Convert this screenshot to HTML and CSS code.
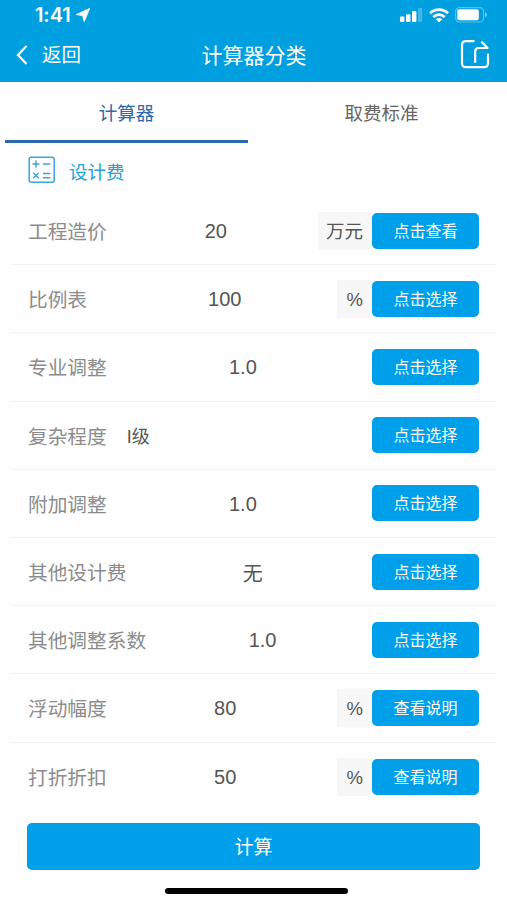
FILE: index.html
```html
<!DOCTYPE html>
<html lang="zh-CN">
<head>
    <meta charset="UTF-8">
    <meta name="viewport" content="width=device-width, initial-scale=1.0">
    <title>计算器分类</title>
    <link rel="stylesheet" href="styles.css">
</head>
<body>
    <header class="header">
        <div class="status-bar">
            <div class="status-time">
                <span>1:41</span>
                <svg class="location" width="14" height="14" viewBox="0 0 14 14"><path d="M13.8 0.3L8.2 13.6L6.6 7.6L0.3 6.6Z" fill="#fff" stroke="#fff" stroke-width="0.8" stroke-linejoin="round"/></svg>
            </div>
            <div class="status-icons">
                <svg width="23" height="14" viewBox="0 0 23 14" fill="#fff">
                    <rect x="0" y="8.5" width="4.4" height="5.5" rx="1"/>
                    <rect x="6" y="6.2" width="4.4" height="7.8" rx="1"/>
                    <rect x="12" y="3" width="4.4" height="11" rx="1"/>
                    <rect x="18" y="0" width="4.2" height="14" rx="1" opacity="0.25"/>
                </svg>
                <svg width="20" height="15" viewBox="0 0 20 15" fill="none" stroke="#fff" stroke-width="2.6">
                    <path d="M1 5.3C6 0.4 14 0.4 19 5.3"/>
                    <path d="M4.3 9C7.5 5.8 12.5 5.8 15.7 9"/>
                    <path d="M10 14.6L6.8 11.3Q10 8.7 13.2 11.3Z" fill="#fff" stroke="none"/>
                </svg>
                <svg width="33" height="16" viewBox="0 0 33 16">
                    <rect x="0.6" y="0.6" width="28" height="14.4" rx="4" fill="none" stroke="#fff" stroke-opacity="0.35" stroke-width="1.2"/>
                    <rect x="2.3" y="2.3" width="21.5" height="11" rx="2" fill="#fff"/>
                    <path d="M30 5.2Q32 6 32 7.8Q32 9.6 30 10.4Z" fill="#fff" opacity="0.45"/>
                </svg>
            </div>
        </div>
        <nav class="nav-bar">
            <a class="back">
                <svg width="12" height="20" viewBox="0 0 12 20" fill="none" stroke="#fff" stroke-width="2.2"><path d="M10.5 1L2 10L10.5 19"/></svg>
                <span>返回</span>
            </a>
            <h1 class="title">计算器分类</h1>
            <a class="share">
                <svg width="30" height="30" viewBox="0 0 30 30" fill="none" stroke="#fff" stroke-width="2.2" stroke-linecap="round" stroke-linejoin="round">
                    <path d="M13.5 2.2H6Q2 2.2 2 6.2V24.2Q2 28.2 6 28.2H24Q28 28.2 28 24.2V15.5"/>
                    <path d="M15.2 23V12.5Q15.2 9 18.7 9H27.5L22 3.2"/>
                </svg>
            </a>
        </nav>
    </header>

    <div class="tabs">
        <div class="tab active">计算器</div>
        <div class="tab">取费标准</div>
    </div>

    <div class="section-title">
        <svg width="28" height="28" viewBox="0 0 28 28" fill="none" stroke="#3aa5d8" stroke-width="1.5">
            <rect x="1.2" y="1.2" width="25" height="25" rx="2"/>
            <path d="M4.5 8H11.5M8 4.5V11.5M15 8H22.3M5.2 16.8L10.7 22.3M10.7 16.8L5.2 22.3M15 17.5H22.3M15 21.7H22.3"/>
        </svg>
        <span>设计费</span>
    </div>

    <form class="rows">
        <div class="row">
            <label class="label">工程造价</label>
            <span class="value">20</span>
            <span class="unit">万元</span>
            <button type="button" class="btn">点击查看</button>
        </div>
        <div class="row">
            <label class="label">比例表</label>
            <span class="value">100</span>
            <span class="unit percent">%</span>
            <button type="button" class="btn">点击选择</button>
        </div>
        <div class="row">
            <label class="label">专业调整</label>
            <span class="value">1.0</span>
            <button type="button" class="btn">点击选择</button>
        </div>
        <div class="row">
            <label class="label">复杂程度</label>
            <span class="value left">I级</span>
            <button type="button" class="btn">点击选择</button>
        </div>
        <div class="row">
            <label class="label">附加调整</label>
            <span class="value">1.0</span>
            <button type="button" class="btn">点击选择</button>
        </div>
        <div class="row">
            <label class="label">其他设计费</label>
            <span class="value">无</span>
            <button type="button" class="btn">点击选择</button>
        </div>
        <div class="row">
            <label class="label">其他调整系数</label>
            <span class="value">1.0</span>
            <button type="button" class="btn">点击选择</button>
        </div>
        <div class="row">
            <label class="label">浮动幅度</label>
            <span class="value">80</span>
            <span class="unit percent">%</span>
            <button type="button" class="btn">查看说明</button>
        </div>
        <div class="row">
            <label class="label">打折折扣</label>
            <span class="value">50</span>
            <span class="unit percent">%</span>
            <button type="button" class="btn">查看说明</button>
        </div>
    </form>

    <button type="button" class="submit">计算</button>
    <div class="home-bar"></div>
</body>
</html>
```
FILE: styles.css
```css
* {
    box-sizing: border-box;
}
body {
    margin: 0;
    height: 900px;
    overflow: hidden;
    background-color: #fefefe;
    font-family: "Liberation Sans", "Noto Sans CJK SC", sans-serif;
    color: #555;
}
.header {
    height: 82px;
    background-color: #009fe0;
    color: #fff;
}
.status-bar {
    height: 30px;
    display: flex;
    justify-content: space-between;
    align-items: center;
    padding: 0 19px 0 35px;
}
.status-time {
    display: flex;
    align-items: center;
    gap: 5px;
    font-family: Inter, sans-serif;
    font-size: 20px;
    font-weight: 600;
    letter-spacing: -0.1px;
}
.status-icons {
    display: flex;
    align-items: center;
    gap: 6px;
}
.nav-bar {
    height: 50px;
    display: grid;
    grid-template-columns: 1fr auto 1fr;
    align-items: center;
    padding: 0 17px 0 16px;
}
.back {
    display: flex;
    align-items: center;
    gap: 14px;
    font-size: 19.5px;
}
.back span {
    margin-top: -4px;
}
.title {
    margin: -2px 0 0 2px;
    font-size: 21px;
    font-weight: normal;
}
.share {
    justify-self: end;
    height: 30px;
    margin-top: -2px;
}
.tabs {
    height: 61px;
    display: flex;
    padding: 0 5px;
}
.tab {
    flex: 1;
    display: flex;
    align-items: center;
    justify-content: center;
    margin-left: 13px;
    padding-top: 1px;
    font-size: 18.5px;
    color: #666;
    border-bottom: 3px solid transparent;
}
.tab.active {
    flex: 0 0 243px;
    margin-left: 0;
    color: #2d68ad;
    border-bottom-color: #2b67ab;
}
.section-title {
    height: 54px;
    display: flex;
    align-items: center;
    gap: 13px;
    padding-left: 28px;
    font-size: 18.5px;
    color: #25a0d8;
}
.section-title span {
    margin-top: 2px;
}
.rows {
    margin: 0 11px;
}
.row {
    height: 68.2px;
    display: flex;
    align-items: center;
    padding: 0 17px;
    border-bottom: 1px solid #f2f2f2;
}
.row:last-child {
    border-bottom: none;
}
.label {
    min-width: 85px;
    padding-right: 7px;
    font-size: 19.7px;
    color: #8c8c8c;
}
.value {
    flex: 1;
    padding-top: 2px;
    text-align: center;
    font-size: 20px;
}
.value.left {
    text-align: left;
    padding-top: 0;
    padding-left: 13px;
    font-size: 18px;
}
.unit {
    height: 38px;
    padding: 0 9px 0 8px;
    line-height: 40px;
    font-size: 18.5px;
    background-color: #f7f7f7;
}
.unit.percent {
    padding-left: 10px;
}
.btn {
    width: 107px;
    height: 36px;
    padding: 0 0 2px;
    border: none;
    border-radius: 5px;
    background-color: #009fe9;
    color: #fff;
    font-family: inherit;
    font-size: 16px;
}
.submit {
    display: block;
    width: 453px;
    height: 47px;
    margin: 12px 0 0 27px;
    padding: 0 0 2px;
    border: none;
    border-radius: 5px;
    background-color: #009fe9;
    color: #fff;
    font-family: inherit;
    font-size: 19px;
}
.home-bar {
    width: 183px;
    height: 6px;
    margin: 18px 0 0 165px;
    border-radius: 3px;
    background-color: #000;
}
```
